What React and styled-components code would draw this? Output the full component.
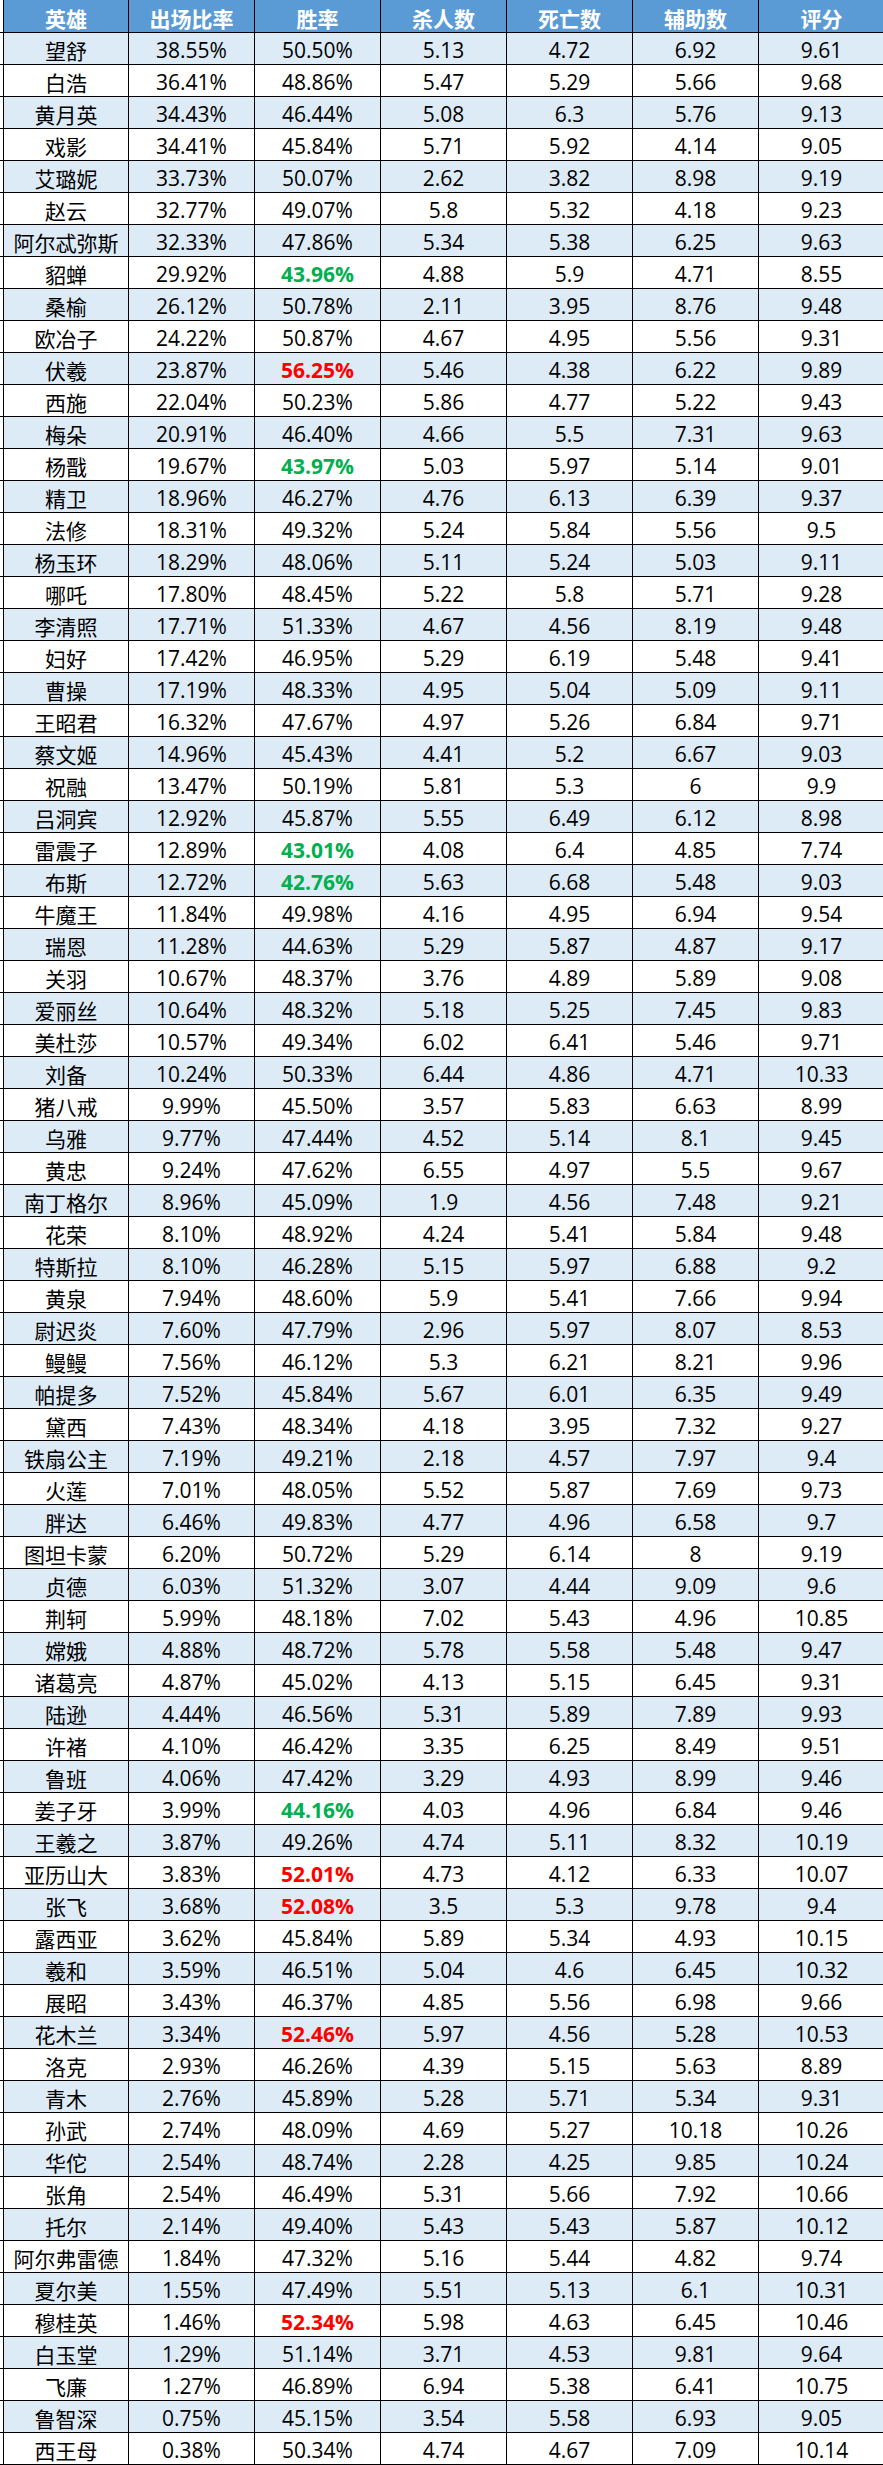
import React from "react";
import styled, { createGlobalStyle } from "styled-components";

const GlobalStyle = createGlobalStyle`
    html, body {
        margin: 0;
        padding: 0;
        background: #fff;
        overflow-x: hidden;
    }
    body {
        font-family: "Open Sans", "Noto Sans CJK SC", sans-serif;
    }
`;

const Sheet = styled.div`
    width: 886px;
`;

const Row = styled.div`
    display: grid;
    grid-template-columns: repeat(7, 126px);
    padding-left: 3px;
    height: ${props => (props.head ? 33 : 32)}px;
    border-bottom: 1px solid #000;
    box-sizing: border-box;
`;

const Cell = styled.div`
    display: flex;
    align-items: center;
    justify-content: center;
    padding-top: 3px;
    box-sizing: border-box;
    border-right: 1px solid #000;
    border-left: ${props => (props.first ? "1px solid #000" : "none")};
    background: ${props => props.bg};
    color: ${props => props.color || "#000"};
    font-size: 21px;
    font-weight: ${props => (props.bold ? 700 : 400)};
    white-space: nowrap;
    overflow: hidden;
`;

const HEAD = ["英雄", "出场比率", "胜率", "杀人数", "死亡数", "辅助数", "评分"];

const ROWS = `望舒 38.55% 50.50% 5.13 4.72 6.92 9.61
白浩 36.41% 48.86% 5.47 5.29 5.66 9.68
黄月英 34.43% 46.44% 5.08 6.3 5.76 9.13
戏影 34.41% 45.84% 5.71 5.92 4.14 9.05
艾璐妮 33.73% 50.07% 2.62 3.82 8.98 9.19
赵云 32.77% 49.07% 5.8 5.32 4.18 9.23
阿尔忒弥斯 32.33% 47.86% 5.34 5.38 6.25 9.63
貂蝉 29.92% 43.96% 4.88 5.9 4.71 8.55
桑榆 26.12% 50.78% 2.11 3.95 8.76 9.48
欧冶子 24.22% 50.87% 4.67 4.95 5.56 9.31
伏羲 23.87% 56.25% 5.46 4.38 6.22 9.89
西施 22.04% 50.23% 5.86 4.77 5.22 9.43
梅朵 20.91% 46.40% 4.66 5.5 7.31 9.63
杨戬 19.67% 43.97% 5.03 5.97 5.14 9.01
精卫 18.96% 46.27% 4.76 6.13 6.39 9.37
法修 18.31% 49.32% 5.24 5.84 5.56 9.5
杨玉环 18.29% 48.06% 5.11 5.24 5.03 9.11
哪吒 17.80% 48.45% 5.22 5.8 5.71 9.28
李清照 17.71% 51.33% 4.67 4.56 8.19 9.48
妇好 17.42% 46.95% 5.29 6.19 5.48 9.41
曹操 17.19% 48.33% 4.95 5.04 5.09 9.11
王昭君 16.32% 47.67% 4.97 5.26 6.84 9.71
蔡文姬 14.96% 45.43% 4.41 5.2 6.67 9.03
祝融 13.47% 50.19% 5.81 5.3 6 9.9
吕洞宾 12.92% 45.87% 5.55 6.49 6.12 8.98
雷震子 12.89% 43.01% 4.08 6.4 4.85 7.74
布斯 12.72% 42.76% 5.63 6.68 5.48 9.03
牛魔王 11.84% 49.98% 4.16 4.95 6.94 9.54
瑞恩 11.28% 44.63% 5.29 5.87 4.87 9.17
关羽 10.67% 48.37% 3.76 4.89 5.89 9.08
爱丽丝 10.64% 48.32% 5.18 5.25 7.45 9.83
美杜莎 10.57% 49.34% 6.02 6.41 5.46 9.71
刘备 10.24% 50.33% 6.44 4.86 4.71 10.33
猪八戒 9.99% 45.50% 3.57 5.83 6.63 8.99
乌雅 9.77% 47.44% 4.52 5.14 8.1 9.45
黄忠 9.24% 47.62% 6.55 4.97 5.5 9.67
南丁格尔 8.96% 45.09% 1.9 4.56 7.48 9.21
花荣 8.10% 48.92% 4.24 5.41 5.84 9.48
特斯拉 8.10% 46.28% 5.15 5.97 6.88 9.2
黄泉 7.94% 48.60% 5.9 5.41 7.66 9.94
尉迟炎 7.60% 47.79% 2.96 5.97 8.07 8.53
鳗鳗 7.56% 46.12% 5.3 6.21 8.21 9.96
帕提多 7.52% 45.84% 5.67 6.01 6.35 9.49
黛西 7.43% 48.34% 4.18 3.95 7.32 9.27
铁扇公主 7.19% 49.21% 2.18 4.57 7.97 9.4
火莲 7.01% 48.05% 5.52 5.87 7.69 9.73
胖达 6.46% 49.83% 4.77 4.96 6.58 9.7
图坦卡蒙 6.20% 50.72% 5.29 6.14 8 9.19
贞德 6.03% 51.32% 3.07 4.44 9.09 9.6
荆轲 5.99% 48.18% 7.02 5.43 4.96 10.85
嫦娥 4.88% 48.72% 5.78 5.58 5.48 9.47
诸葛亮 4.87% 45.02% 4.13 5.15 6.45 9.31
陆逊 4.44% 46.56% 5.31 5.89 7.89 9.93
许褚 4.10% 46.42% 3.35 6.25 8.49 9.51
鲁班 4.06% 47.42% 3.29 4.93 8.99 9.46
姜子牙 3.99% 44.16% 4.03 4.96 6.84 9.46
王羲之 3.87% 49.26% 4.74 5.11 8.32 10.19
亚历山大 3.83% 52.01% 4.73 4.12 6.33 10.07
张飞 3.68% 52.08% 3.5 5.3 9.78 9.4
露西亚 3.62% 45.84% 5.89 5.34 4.93 10.15
羲和 3.59% 46.51% 5.04 4.6 6.45 10.32
展昭 3.43% 46.37% 4.85 5.56 6.98 9.66
花木兰 3.34% 52.46% 5.97 4.56 5.28 10.53
洛克 2.93% 46.26% 4.39 5.15 5.63 8.89
青木 2.76% 45.89% 5.28 5.71 5.34 9.31
孙武 2.74% 48.09% 4.69 5.27 10.18 10.26
华佗 2.54% 48.74% 2.28 4.25 9.85 10.24
张角 2.54% 46.49% 5.31 5.66 7.92 10.66
托尔 2.14% 49.40% 5.43 5.43 5.87 10.12
阿尔弗雷德 1.84% 47.32% 5.16 5.44 4.82 9.74
夏尔美 1.55% 47.49% 5.51 5.13 6.1 10.31
穆桂英 1.46% 52.34% 5.98 4.63 6.45 10.46
白玉堂 1.29% 51.14% 3.71 4.53 9.81 9.64
飞廉 1.27% 46.89% 6.94 5.38 6.41 10.75
鲁智深 0.75% 45.15% 3.54 5.58 6.93 9.05
西王母 0.38% 50.34% 4.74 4.67 7.09 10.14`
    .split("\n")
    .map(line => line.trim().split(" "));

// win rate colour: high ones red, low ones green
const rateColor = value => {
    const v = parseFloat(value);
    if (v >= 52) return "#ff0000";
    if (v < 44.5) return "#00b050";
    return null;
};

export default function App() {
    return (
        <>
            <GlobalStyle />
            <Sheet>
                <Row head>
                    {HEAD.map((h, i) => (
                        <Cell key={h} first={i === 0} bg="#5b9bd5" color="#fff" bold>
                            {h}
                        </Cell>
                    ))}
                </Row>
                {ROWS.map((cells, r) => (
                    <Row key={cells[0]}>
                        {cells.map((c, i) => {
                            const color = i === 2 ? rateColor(c) : null;
                            return (
                                <Cell
                                    key={i}
                                    first={i === 0}
                                    bg={r % 2 === 0 ? "#ddebf7" : "#fff"}
                                    color={color}
                                    bold={!!color}
                                >
                                    {c}
                                </Cell>
                            );
                        })}
                    </Row>
                ))}
            </Sheet>
        </>
    );
}
